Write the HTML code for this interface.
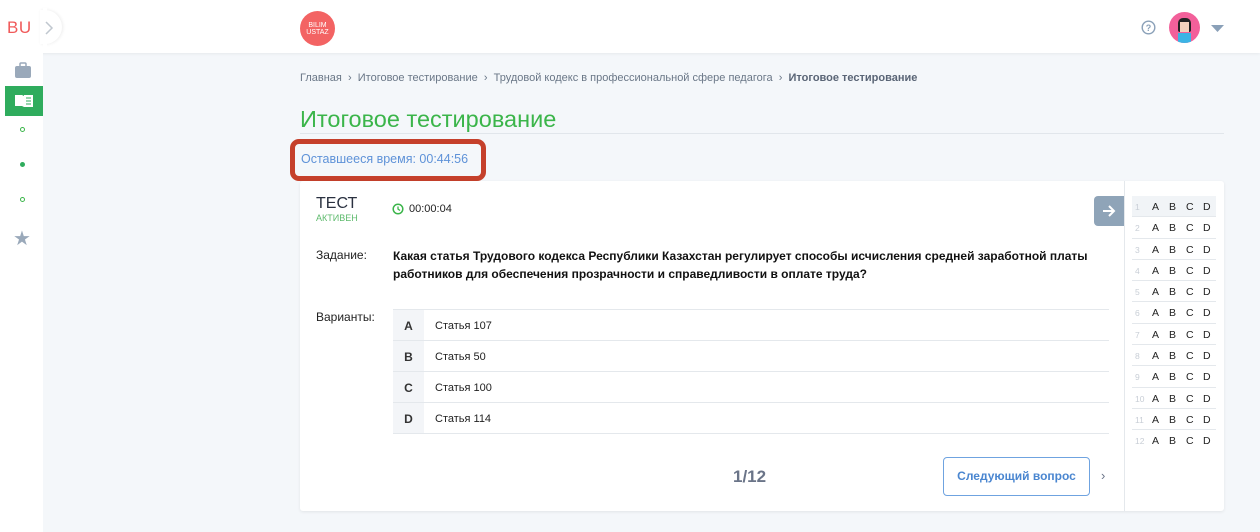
<!DOCTYPE html>
<html><head><meta charset="utf-8"><style>
*{box-sizing:border-box;margin:0;padding:0}
body{width:1260px;height:532px;overflow:hidden;background:#f4f7fa;font-family:"Liberation Sans",Arial,sans-serif;position:relative}
.abs{position:absolute}
.header{left:0;top:0;width:1260px;height:53px;background:#fff;box-shadow:0 1px 3px rgba(0,0,0,.06)}
.side{left:0;top:0;width:43px;height:532px;background:#fff}
.bc{left:300px;top:72px;font-size:11px;color:#6a7787}
.bc b{color:#5a6576}
h1{position:absolute;left:300px;top:106px;font-size:23.5px;font-weight:normal;color:#3bb54a}
.rule{left:300px;top:133px;width:924px;height:1px;background:#e1e6eb}
.timer{left:290px;top:139px;width:196px;height:42px;border:5px solid #c5402b;border-radius:9px;font-size:12.5px;color:#5e92d8;padding:8px 0 0 6px}
.card{left:300px;top:181px;width:924px;height:330px;background:#fff;box-shadow:0 1px 3px rgba(0,0,0,.08);border-radius:3px}
.opt{position:absolute;left:93px;width:716px;height:31px;border-top:1px solid #e4e8ec;font-size:11px;color:#222}
.opt .l{position:absolute;left:0;top:0;width:31px;height:30px;background:#f3f5f8;font-weight:bold;font-size:12px;text-align:center;line-height:32px;color:#333}
.opt .t{position:absolute;left:42px;top:10px}
.grid{position:absolute;left:832px;top:15px;width:84px}
.row{height:21.3px;border-bottom:1px solid #e4e8ec;font-size:10.5px;color:#222;position:relative}
.row span{position:absolute;top:5px}
.row .n{color:#c8ced6;font-size:8.5px;left:3px;top:6px}
</style></head><body>
<div class="abs header"></div>
<div class="abs side"></div>
<div class="abs" style="left:40px;top:10px;width:22px;height:34px;border-radius:0 17px 17px 0;background:#fff;box-shadow:1px 0 3px rgba(0,0,0,.08)"></div>
<div class="abs" style="left:43px;top:8px;width:4px;height:40px;background:#fff"></div>
<div class="abs" style="left:7px;top:18px;font-size:17px;color:#f05a5a;letter-spacing:0.5px">BU</div>
<svg class="abs" style="left:44px;top:20px" width="10" height="16"><path d="M2 2l6 6-6 6" fill="none" stroke="#c0c7cf" stroke-width="1.5"/></svg>
<div class="abs" style="left:300px;top:11px;width:35px;height:35px;border-radius:50%;background:#f36363;color:#fff;font-size:7px;line-height:7px;text-align:center;padding-top:11px">BILIM<br>USTAZ</div>
<svg class="abs" style="left:14px;top:62px" width="18" height="17"><rect x="1" y="4" width="16" height="12" rx="2" fill="#9aa9ba"/><rect x="6" y="1" width="6" height="4" rx="1" fill="none" stroke="#9aa9ba" stroke-width="1.5"/></svg>
<div class="abs" style="left:5px;top:86px;width:38px;height:30px;background:#2fac5d"></div>
<svg class="abs" style="left:14px;top:94px" width="20" height="14"><path d="M1 1h7l2 1v11l-2-1H1z" fill="#fff"/><rect x="10" y="1" width="9" height="12" fill="#fff"/><path d="M12 4h5M12 7h5M12 10h5" stroke="#2fac5d"/></svg>
<div class="abs" style="left:20px;top:127px;width:5px;height:5px;border:1px solid #3bb54a;border-radius:50%"></div>
<div class="abs" style="left:20px;top:162px;width:5px;height:5px;background:#2fac5d;border-radius:50%"></div>
<div class="abs" style="left:20px;top:197px;width:5px;height:5px;border:1px solid #3bb54a;border-radius:50%"></div>
<div class="abs" style="left:13px;top:226px;font-size:20px;color:#9aa9ba">★</div>
<svg class="abs" style="left:1141px;top:20px" width="15" height="15"><circle cx="7.5" cy="7.5" r="6.3" fill="none" stroke="#8aa0b8" stroke-width="1.4"/><text x="7.5" y="11" font-size="9" font-weight="bold" text-anchor="middle" fill="#8aa0b8" font-family="Liberation Sans">?</text></svg>
<div class="abs" style="left:1169px;top:12px;width:31px;height:31px;border-radius:50%;background:#f2609a;overflow:hidden"><div style="position:absolute;left:9px;top:6px;width:13px;height:14px;background:#222;border-radius:5px 5px 2px 2px"></div><div style="position:absolute;left:11px;top:10px;width:9px;height:10px;background:#f3d2bd"></div><div style="position:absolute;left:9px;top:21px;width:13px;height:10px;background:#3bb4e5"></div></div>
<svg class="abs" style="left:1211px;top:25px" width="13" height="8"><path d="M0 0h13L6.5 7z" fill="#8aa0b8"/></svg>
<div class="abs bc">Главная &nbsp;›&nbsp; Итоговое тестирование &nbsp;›&nbsp; Трудовой кодекс в профессиональной сфере педагога &nbsp;›&nbsp; <b>Итоговое тестирование</b></div>
<h1>Итоговое тестирование</h1>
<div class="abs rule"></div>
<div class="abs timer">Оставшееся время: 00:44:56</div>
<div class="abs card">
 <div class="abs" style="left:16px;top:14px;font-size:16px;color:#2a3140">ТЕСТ</div>
 <div class="abs" style="left:16px;top:32px;font-size:9px;color:#5dba6c">АКТИВЕН</div>
 <svg class="abs" style="left:92px;top:22px" width="12" height="12"><circle cx="6" cy="6" r="4.8" fill="none" stroke="#3bb54a" stroke-width="1.5"/><path d="M6 3.5V6l2 1.5" fill="none" stroke="#3bb54a" stroke-width="1.3"/></svg>
 <div class="abs" style="left:109px;top:22px;font-size:11px;color:#222">00:00:04</div>
 <div class="abs" style="left:794px;top:15px;width:31px;height:30px;background:#8fa4b8;border-radius:4px 0 0 4px"></div>
 <svg class="abs" style="left:801px;top:22px" width="16" height="16"><path d="M2 8h11M8 3l5 5-5 5" fill="none" stroke="#fff" stroke-width="2"/></svg>
 <div class="abs" style="left:824px;top:0;width:1px;height:330px;background:#e4e8ec"></div>
 <div class="abs" style="left:16px;top:67px;font-size:12px;color:#222">Задание:</div>
 <div class="abs" style="left:93px;top:66px;width:720px;font-size:12px;font-weight:bold;color:#111;line-height:18px">Какая статья Трудового кодекса Республики Казахстан регулирует способы исчисления средней заработной платы работников для обеспечения прозрачности и справедливости в оплате труда?</div>
 <div class="abs" style="left:16px;top:129px;font-size:12px;color:#222">Варианты:</div>
 <div class="opt" style="top:128px"><div class="l">A</div><div class="t">Статья 107</div></div>
 <div class="opt" style="top:159px"><div class="l">B</div><div class="t">Статья 50</div></div>
 <div class="opt" style="top:190px"><div class="l">C</div><div class="t">Статья 100</div></div>
 <div class="opt" style="top:221px;border-bottom:1px solid #e4e8ec;height:32px"><div class="l">D</div><div class="t">Статья 114</div></div>
 <div class="abs" style="left:433px;top:286px;font-size:17px;font-weight:bold;color:#6a7488">1/12</div>
 <div class="abs" style="left:643px;top:276px;width:147px;height:39px;border:1px solid #6fa3e0;border-radius:4px;font-size:12px;font-weight:bold;color:#4a86d0;text-align:center;line-height:37px">Следующий вопрос</div>
 <div class="abs" style="left:801px;top:287px;font-size:13px;color:#6a7488">›</div>
 <div class="grid">
  <div class="row" style="background:#f1f4f7"><span class="n">1</span><span style="left:20px">A</span><span style="left:37px">B</span><span style="left:54px">C</span><span style="left:71px">D</span></div>
  <div class="row"><span class="n">2</span><span style="left:20px">A</span><span style="left:37px">B</span><span style="left:54px">C</span><span style="left:71px">D</span></div>
  <div class="row"><span class="n">3</span><span style="left:20px">A</span><span style="left:37px">B</span><span style="left:54px">C</span><span style="left:71px">D</span></div>
  <div class="row"><span class="n">4</span><span style="left:20px">A</span><span style="left:37px">B</span><span style="left:54px">C</span><span style="left:71px">D</span></div>
  <div class="row"><span class="n">5</span><span style="left:20px">A</span><span style="left:37px">B</span><span style="left:54px">C</span><span style="left:71px">D</span></div>
  <div class="row"><span class="n">6</span><span style="left:20px">A</span><span style="left:37px">B</span><span style="left:54px">C</span><span style="left:71px">D</span></div>
  <div class="row"><span class="n">7</span><span style="left:20px">A</span><span style="left:37px">B</span><span style="left:54px">C</span><span style="left:71px">D</span></div>
  <div class="row"><span class="n">8</span><span style="left:20px">A</span><span style="left:37px">B</span><span style="left:54px">C</span><span style="left:71px">D</span></div>
  <div class="row"><span class="n">9</span><span style="left:20px">A</span><span style="left:37px">B</span><span style="left:54px">C</span><span style="left:71px">D</span></div>
  <div class="row"><span class="n">10</span><span style="left:20px">A</span><span style="left:37px">B</span><span style="left:54px">C</span><span style="left:71px">D</span></div>
  <div class="row"><span class="n">11</span><span style="left:20px">A</span><span style="left:37px">B</span><span style="left:54px">C</span><span style="left:71px">D</span></div>
  <div class="row" style="border-bottom:none"><span class="n">12</span><span style="left:20px">A</span><span style="left:37px">B</span><span style="left:54px">C</span><span style="left:71px">D</span></div>
 </div>
</div>
</body></html>
